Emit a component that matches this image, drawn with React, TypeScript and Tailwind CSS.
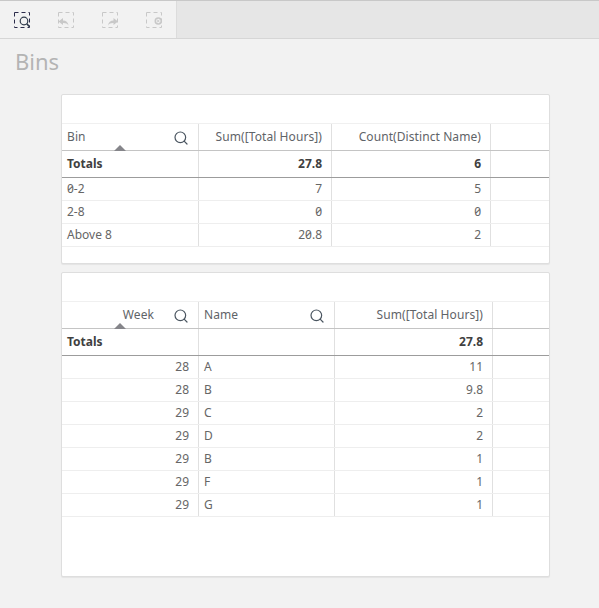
import { Search } from "lucide-react";

type Cell = { text: string; right?: boolean; search?: boolean };

const DashedIcon = ({ dark, children }: { dark?: boolean; children: React.ReactNode }) => (
  <svg width="18" height="18" viewBox="0 0 18 18" fill="none">
    <rect
      x="1.5"
      y="1.5"
      width="15"
      height="15"
      strokeWidth="1"
      strokeDasharray="4 3"
      stroke={dark ? "#2b2b4a" : "#c8c8c8"}
    />
    {children}
  </svg>
);

const Toolbar = () => (
  <div className="flex h-[39px] border-t border-t-[#c8c8c8] border-b border-b-[#d6d6d6] bg-[#e6e6e6]">
    <div className="flex w-[177px] items-center gap-[26px] border-r border-r-[#dcdcdc] bg-[#f2f2f2] pl-[13px]">
      <DashedIcon dark>
        <circle cx="11" cy="10" r="3.8" stroke="#2f3a4a" strokeWidth="1.2" />
        <path d="M13.8 12.8 16.5 15.8" stroke="#2f3a4a" strokeWidth="1.6" />
      </DashedIcon>
      <DashedIcon>
        <path d="M1.5 10.5 6 7v2.4c3 0 5 1.6 5.5 5-1.3-1.8-3-2.4-5.5-2.300V14z" fill="#c8c8c8" />
      </DashedIcon>
      <DashedIcon>
        <path d="M17 10.5 12.5 7v2.4c-3 0-5 1.6-5.5 5 1.3-1.8 3-2.4 5.5-2.300V14z" fill="#c8c8c8" />
      </DashedIcon>
      <DashedIcon>
        <circle cx="13.3" cy="10" r="3" stroke="#c8c8c8" strokeWidth="1.6" />
        <path d="m12.1 8.8 2.4 2.4m0-2.4-2.4 2.4" stroke="#c8c8c8" strokeWidth="1" />
      </DashedIcon>
    </div>
  </div>
);

const Row = ({
  cells,
  grid,
  className,
  cellClass,
}: {
  cells: Cell[];
  grid: string;
  className: string;
  cellClass?: string;
}) => (
  <div className={`grid ${grid} border-b ${className}`}>
    {cells.map((c, i) => (
      <div
        key={i}
        className={`relative flex items-center border-r border-r-[#e0e0e0] pl-[5px] pr-[6px] last:border-r-0 ${
          c.right ? "justify-end pr-[9px]" : ""
        } ${cellClass ?? ""}`}
      >
        {c.search && c.right && <span className="pr-[35px]">{c.text}</span>}
        {!(c.search && c.right) && <span>{c.text}</span>}
        {c.search && (
          <Search
            size={16}
            strokeWidth={1.8}
            className="absolute right-[9px] top-[6px] text-[#4a5560]"
          />
        )}
      </div>
    ))}
  </div>
);

const SortMark = () => (
  <div className="absolute left-[52px] top-[21px] h-0 w-0 border-x-[6px] border-b-[6px] border-x-transparent border-b-[#85858a]" />
);

const DataTable = ({
  grid,
  height,
  header,
  totals,
  rows,
}: {
  grid: string;
  height: string;
  header: Cell[];
  totals: Cell[];
  rows: Cell[][];
}) => (
  <div className={`mx-[61px] ${height} w-[489px] rounded-[2px] border border-[#dedede] bg-white shadow-[0_1px_1px_rgba(0,0,0,0.06)]`}>
    <div className="h-[29px] border-b border-b-[#f0f0f0]" />
    <div className="relative">
      <Row
        cells={header}
        grid={grid}
        className="h-[27px] border-b-[#c4c4c4] tracking-[0.08px] text-[#5f6468]"
      />
      <SortMark />
    </div>
    <Row
      cells={totals}
      grid={grid}
      className="h-[27px] border-b-[#9c9c9c] font-bold text-[#404040]"
    />
    {rows.map((r, i) => (
      <Row key={i} cells={r} grid={grid} className="h-[23px] border-b-[#eeeeee] text-[#666666]" cellClass="slashed-zero" />
    ))}
  </div>
);

const r = (text: string): Cell => ({ text, right: true });
const l = (text: string): Cell => ({ text });

export default function App() {
  const g1 = "grid-cols-[137px_133px_159px_1fr]";
  const g2 = "grid-cols-[137px_136px_158px_1fr]";
  return (
    <div className="h-[608px] bg-[#f2f2f2] font-['Noto_Sans','Open_Sans',sans-serif] text-[12px]">
      <Toolbar />
      <h1 className="h-[55px] pl-[15px] pt-[7px] text-[22px] leading-[30px] text-[#b4b4b4]">Bins</h1>
      <div className="flex flex-col gap-[8px]">
        <DataTable
          grid={g1}
          height="h-[170px]"
          header={[
            { text: "Bin", search: true },
            r("Sum([Total Hours])"),
            r("Count(Distinct Name)"),
            l(""),
          ]}
          totals={[l("Totals"), r("27.8"), r("6"), l("")]}
          rows={[
            [l("0-2"), r("7"), r("5"), l("")],
            [l("2-8"), r("0"), r("0"), l("")],
            [l("Above 8"), r("20.8"), r("2"), l("")],
          ]}
        />
        <DataTable
          grid={g2}
          height="h-[305px]"
          header={[
            { text: "Week", right: true, search: true },
            { text: "Name", search: true },
            r("Sum([Total Hours])"),
            l(""),
          ]}
          totals={[l("Totals"), l(""), r("27.8"), l("")]}
          rows={[
            [r("28"), l("A"), r("11"), l("")],
            [r("28"), l("B"), r("9.8"), l("")],
            [r("29"), l("C"), r("2"), l("")],
            [r("29"), l("D"), r("2"), l("")],
            [r("29"), l("B"), r("1"), l("")],
            [r("29"), l("F"), r("1"), l("")],
            [r("29"), l("G"), r("1"), l("")],
          ]}
        />
      </div>
    </div>
  );
}
